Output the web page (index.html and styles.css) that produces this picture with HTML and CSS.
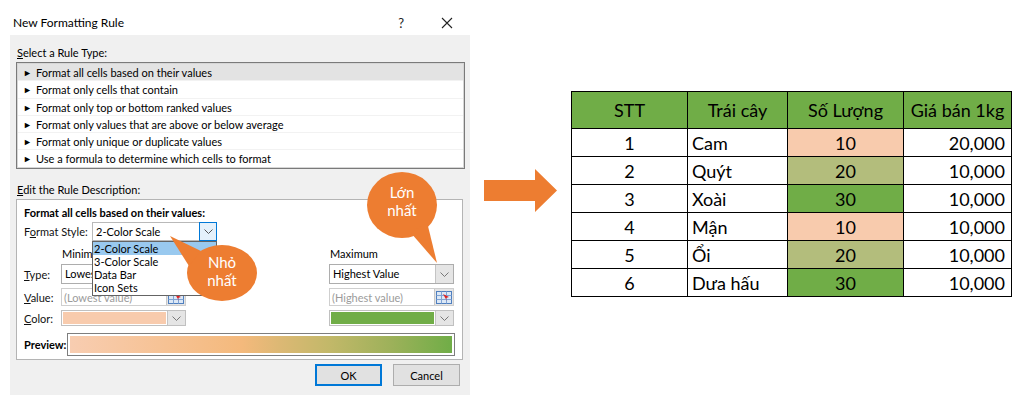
FILE: index.html
```html
<!DOCTYPE html>
<html lang="vi">
<head>
<meta charset="utf-8">
<title>New Formatting Rule</title>
<link rel="stylesheet" href="styles.css">
</head>
<body>
<div class="page">
  <div class="dialog">
    <div class="titlebar">
      <span class="title">New Formatting Rule</span>
      <span class="help">?</span>
      <svg class="close" width="12" height="12" viewBox="0 0 12 12"><path d="M1 1 L11 11 M11 1 L1 11" stroke="#222" stroke-width="1.1" fill="none"/></svg>
    </div>
    <div class="dbody">
      <div class="section-label"><u>S</u>elect a Rule Type:</div>
      <ul class="rulelist">
        <li class="sel"><span class="tri">►</span>Format all cells based on their values</li>
        <li><span class="tri">►</span>Format only cells that contain</li>
        <li><span class="tri">►</span>Format only top or bottom ranked values</li>
        <li><span class="tri">►</span>Format only values that are above or below average</li>
        <li><span class="tri">►</span>Format only unique or duplicate values</li>
        <li><span class="tri">►</span>Use a formula to determine which cells to format</li>
      </ul>
      <div class="section-label second"><u>E</u>dit the Rule Description:</div>
      <div class="descbox">
        <div class="bold">Format all cells based on their values:</div>
        <div class="stylerow">
          <span class="lbl style-lbl">F<u>o</u>rmat Style:</span>
          <div class="combo focus">
            <span class="ctext">2-Color Scale</span>
            <span class="cbtn"><svg width="9" height="5" viewBox="0 0 9 5"><polyline points="0.5,0.5 4.5,4.5 8.5,0.5" fill="none" stroke="#555"/></svg></span>
            <ul class="droplist">
              <li class="hi">2-Color Scale</li>
              <li>3-Color Scale</li>
              <li>Data Bar</li>
              <li>Icon Sets</li>
            </ul>
          </div>
        </div>
        <div class="grid">
          <span></span><span class="colhead">Minimum</span><span></span><span class="colhead">Maximum</span>

          <span class="lbl"><u>T</u>ype:</span>
          <div class="combo tall"><span class="ctext">Lowest Value</span><span class="cbtn"><svg width="9" height="5" viewBox="0 0 9 5"><polyline points="0.5,0.5 4.5,4.5 8.5,0.5" fill="none" stroke="#777"/></svg></span></div>
          <span></span>
          <div class="combo tall"><span class="ctext">Highest Value</span><span class="cbtn"><svg width="9" height="5" viewBox="0 0 9 5"><polyline points="0.5,0.5 4.5,4.5 8.5,0.5" fill="none" stroke="#777"/></svg></span></div>

          <span class="lbl"><u>V</u>alue:</span>
          <div class="valbox"><span class="vtext">(Lowest value)</span><span class="rbtn"><svg width="16" height="13" viewBox="0 0 16 13"><rect x="0.5" y="0.5" width="15" height="12" fill="#dce8f6" stroke="#4f7fbf"/><path d="M0.5 4.5 H15.5 M0.5 8.5 H15.5 M5.5 0.5 V12.5 M10.5 0.5 V12.5" stroke="#7fa4d6" fill="none"/><path d="M7 3 L13 6 L10 7 L11 10 L7 3 Z" fill="#e02020"/></svg></span></div>
          <span></span>
          <div class="valbox"><span class="vtext">(Highest value)</span><span class="rbtn"><svg width="16" height="13" viewBox="0 0 16 13"><rect x="0.5" y="0.5" width="15" height="12" fill="#dce8f6" stroke="#4f7fbf"/><path d="M0.5 4.5 H15.5 M0.5 8.5 H15.5 M5.5 0.5 V12.5 M10.5 0.5 V12.5" stroke="#7fa4d6" fill="none"/><path d="M7 3 L13 6 L10 7 L11 10 L7 3 Z" fill="#e02020"/></svg></span></div>

          <span class="lbl"><u>C</u>olor:</span>
          <div class="combo color"><span class="swatch peach"></span><span class="cbtn"><svg width="9" height="5" viewBox="0 0 9 5"><polyline points="0.5,0.5 4.5,4.5 8.5,0.5" fill="none" stroke="#777"/></svg></span></div>
          <span></span>
          <div class="combo color"><span class="swatch green"></span><span class="cbtn"><svg width="9" height="5" viewBox="0 0 9 5"><polyline points="0.5,0.5 4.5,4.5 8.5,0.5" fill="none" stroke="#777"/></svg></span></div>
        </div>
        <div class="preview-row">
          <span class="bold plabel">Preview:</span>
          <div class="preview"><div class="grad"></div></div>
        </div>
      </div>
      <div class="buttons">
        <button class="btn ok">OK</button>
        <button class="btn">Cancel</button>
      </div>
    </div>
  </div>

  <svg class="arrow" width="73" height="43" viewBox="0 0 73 43"><polygon points="0,11 51,11 51,0 73,21.5 51,43 51,32 0,32" fill="#ed7d31"/></svg>

  <table class="data">
    <thead>
      <tr><th>STT</th><th>Trái cây</th><th>Số Lượng</th><th>Giá bán 1kg</th></tr>
    </thead>
    <tbody>
      <tr><td class="c">1</td><td class="l">Cam</td><td class="c q1">10</td><td class="r">20,000</td></tr>
      <tr><td class="c">2</td><td class="l">Quýt</td><td class="c q2">20</td><td class="r">10,000</td></tr>
      <tr><td class="c">3</td><td class="l">Xoài</td><td class="c q3">30</td><td class="r">10,000</td></tr>
      <tr><td class="c">4</td><td class="l">Mận</td><td class="c q1">10</td><td class="r">10,000</td></tr>
      <tr><td class="c">5</td><td class="l">Ổi</td><td class="c q2">20</td><td class="r">10,000</td></tr>
      <tr><td class="c">6</td><td class="l">Dưa hấu</td><td class="c q3">30</td><td class="r">10,000</td></tr>
    </tbody>
  </table>

  <svg class="callouts" width="1024" height="402" viewBox="0 0 1024 402">
    <ellipse cx="402" cy="205" rx="35" ry="33" fill="#ed7d31"/>
    <polygon points="411,233 427,222 437,263" fill="#ed7d31"/>
    <text x="402" y="198" class="ctxt">Lớn</text>
    <text x="402" y="216" class="ctxt">nhất</text>
    <ellipse cx="222" cy="273" rx="35" ry="28" fill="#ed7d31"/>
    <polygon points="170,236 201,251 189,266" fill="#ed7d31"/>
    <text x="222" y="268" class="ctxt">Nhỏ</text>
    <text x="222" y="286" class="ctxt">nhất</text>
  </svg>
</div>
</body>
</html>
```

FILE: styles.css
```css
* { box-sizing: border-box; }

html, body {
  margin: 0;
  padding: 0;
  background: #ffffff;
}

body {
  width: 1024px;
  height: 402px;
  overflow: hidden;
  font-family: "Lato", "Noto Sans", sans-serif;
  color: #000;
}

.page {
  position: relative;
  display: flex;
  align-items: flex-start;
  width: 1024px;
  height: 402px;
}

/* ---------- Dialog ---------- */
.dialog {
  margin-left: 10px;
  margin-top: 10px;
  width: 460px;
  display: flex;
  flex-direction: column;
}

.titlebar {
  height: 25px;
  background: #ffffff;
  display: flex;
  align-items: center;
  padding-left: 3px;
  font-size: 12px;
}

.title { flex: 1; }

.help {
  font-size: 13px;
  margin-right: 37px;
  color: #222;
}

.close { margin-right: 17px; }

.dbody {
  background: #f0f0f0;
  height: 360px;
  padding: 0 5px 0 6px;
  font-size: 11px;
  display: flex;
  flex-direction: column;
}

.section-label {
  margin-top: 11px;
  padding-left: 1px;
  height: 14px;
  line-height: 14px;
  font-size: 11px;
}

.section-label.second { margin-top: 14px; }

.rulelist {
  list-style: none;
  margin: 2px 0 0 0;
  padding: 1px 1px 2px 1px;
  width: 449px;
  height: 107px;
  background: #fff;
  border: 1px solid #7a7a7a;
  box-shadow: inset 0 0 0 1px #d6d6d6;
}

.rulelist li {
  height: 17.3px;
  line-height: 17px;
  padding-left: 5px;
  font-size: 11px;
  border-bottom: 1px solid #f2f2f2;
  white-space: nowrap;
}

.rulelist li:last-child { border-bottom: none; }

.rulelist li.sel { background: #e3e3e3; }

.tri {
  display: inline-block;
  font-size: 9px;
  width: 13px;
  vertical-align: 1px;
}

/* ---------- Description box ---------- */
.descbox {
  margin-top: 2px;
  width: 447px;
  height: 161px;
  background: #fff;
  border: 1px solid #b4b4b4;
  padding: 6px 0 4px 7px;
  display: flex;
  flex-direction: column;
}

.bold {
  font-weight: bold;
  font-size: 11px;
  line-height: 13px;
  height: 13px;
}

.stylerow {
  margin-top: 3px;
  height: 19px;
  display: flex;
  align-items: center;
}

.lbl {
  font-size: 11px;
  color: #111;
}

.style-lbl { width: 68px; }

.combo {
  position: relative;
  width: 125px;
  height: 19px;
  border: 1px solid #adadad;
  background: #fff;
  display: flex;
  align-items: stretch;
}

.ctext {
  flex: 1;
  padding-left: 3px;
  font-size: 11px;
  line-height: 17px;
  overflow: hidden;
  white-space: nowrap;
}

.cbtn {
  width: 18px;
  background: #e5e5e5;
  border-left: 1px solid #c4c4c4;
  display: flex;
  align-items: center;
  justify-content: center;
}

.combo.focus { border-color: #b9b9b9; }

.combo.focus .cbtn {
  background: #e5f1fb;
  border: 1px solid #0078d7;
  margin: -1px -1px -1px 0;
  width: 18px;
}

.droplist {
  position: absolute;
  left: -1px;
  top: 18px;
  width: 125px;
  margin: 0;
  padding: 0 0 1px 0;
  list-style: none;
  background: #fff;
  border: 1px solid #646464;
  z-index: 5;
}

.droplist li {
  height: 13px;
  line-height: 13px;
  font-size: 11px;
  padding-left: 1px;
}

.droplist li.hi { background: #99c9ef; }

.grid {
  margin-top: 7px;
  display: grid;
  grid-template-columns: 37px 125px 143px 125px;
  grid-template-rows: 12px 20px 18px 16px;
  row-gap: 4px;
  align-items: center;
}

.grid .colhead {
  font-size: 11px;
  line-height: 12px;
  padding-left: 1px;
  white-space: nowrap;
}

.grid .combo.tall { height: 20px; }
.grid .combo.tall .ctext { line-height: 18px; }

.grid .lbl { margin-top: 1px; }

.valbox {
  height: 18px;
  border: 1px solid #cfcfcf;
  background: #fff;
  display: flex;
}

.vtext {
  flex: 1;
  color: #9b9b9b;
  font-size: 11px;
  line-height: 17px;
  padding-left: 2px;
  white-space: nowrap;
}

.rbtn {
  width: 19px;
  background: #e5e5e5;
  border-left: 1px solid #c8c8c8;
  display: flex;
  align-items: center;
  justify-content: center;
}

.combo.color {
  height: 16px;
  border-color: #c0c0c0;
}

.swatch {
  flex: 1;
  margin: 1px;
}

.swatch.peach { background: #f8cbad; }
.swatch.green { background: #70ad47; }

.preview-row {
  margin-top: 7px;
  height: 23px;
  display: flex;
  align-items: center;
}

.plabel {
  width: 43px;
  height: auto;
}

.preview {
  width: 388px;
  height: 23px;
  border: 1px solid #7e7e7e;
  padding: 2px;
  background: #fff;
}

.grad {
  width: 100%;
  height: 100%;
  background: linear-gradient(to right, #f8cdb1 0%, #f6c294 25%, #f4b97c 45%, #dcb874 55%, #c2b869 68%, #9db15a 84%, #70ad47 100%);
}

.buttons {
  margin-top: 4px;
  height: 22px;
  display: flex;
  justify-content: flex-end;
  gap: 11px;
  padding-right: 5px;
}

.btn {
  width: 67px;
  height: 22px;
  font-family: "Lato", "Noto Sans", sans-serif;
  font-size: 11px;
  background: #e1e1e1;
  border: 1px solid #adadad;
  color: #000;
  padding: 0;
}

.btn.ok {
  border: 2px solid #0078d7;
}

/* ---------- Arrow ---------- */
.arrow {
  margin-left: 14px;
  margin-top: 169px;
  flex: none;
}

/* ---------- Table ---------- */
.data {
  margin-left: 14px;
  margin-top: 91px;
  border-collapse: collapse;
  font-family: "Lato", "Noto Sans", sans-serif;
  font-size: 18px;
  flex: none;
}

.data th, .data td {
  border: 1px solid #000;
  padding: 0;
  white-space: nowrap;
}

.data th {
  background: #70ad47;
  font-weight: normal;
  height: 37px;
  text-align: center;
}

.data th:nth-child(1) { width: 116px; }
.data th:nth-child(2) { width: 100px; }
.data th:nth-child(3) { width: 116px; }
.data th:nth-child(4) { width: 108px; }

.data td { height: 28px; }

.data td.c { text-align: center; }
.data td.l { text-align: left; padding-left: 4px; }
.data td.r { text-align: right; padding-right: 6px; }

.data td.q1 { background: #f8cbad; }
.data td.q2 { background: #b3bd7c; }
.data td.q3 { background: #70ad47; }

/* ---------- Callouts ---------- */
.callouts {
  position: absolute;
  left: 0;
  top: 0;
  pointer-events: none;
  z-index: 10;
}

.ctxt {
  fill: #ffffff;
  font-family: "Lato", "Noto Sans", sans-serif;
  font-size: 15px;
  text-anchor: middle;
}
```
